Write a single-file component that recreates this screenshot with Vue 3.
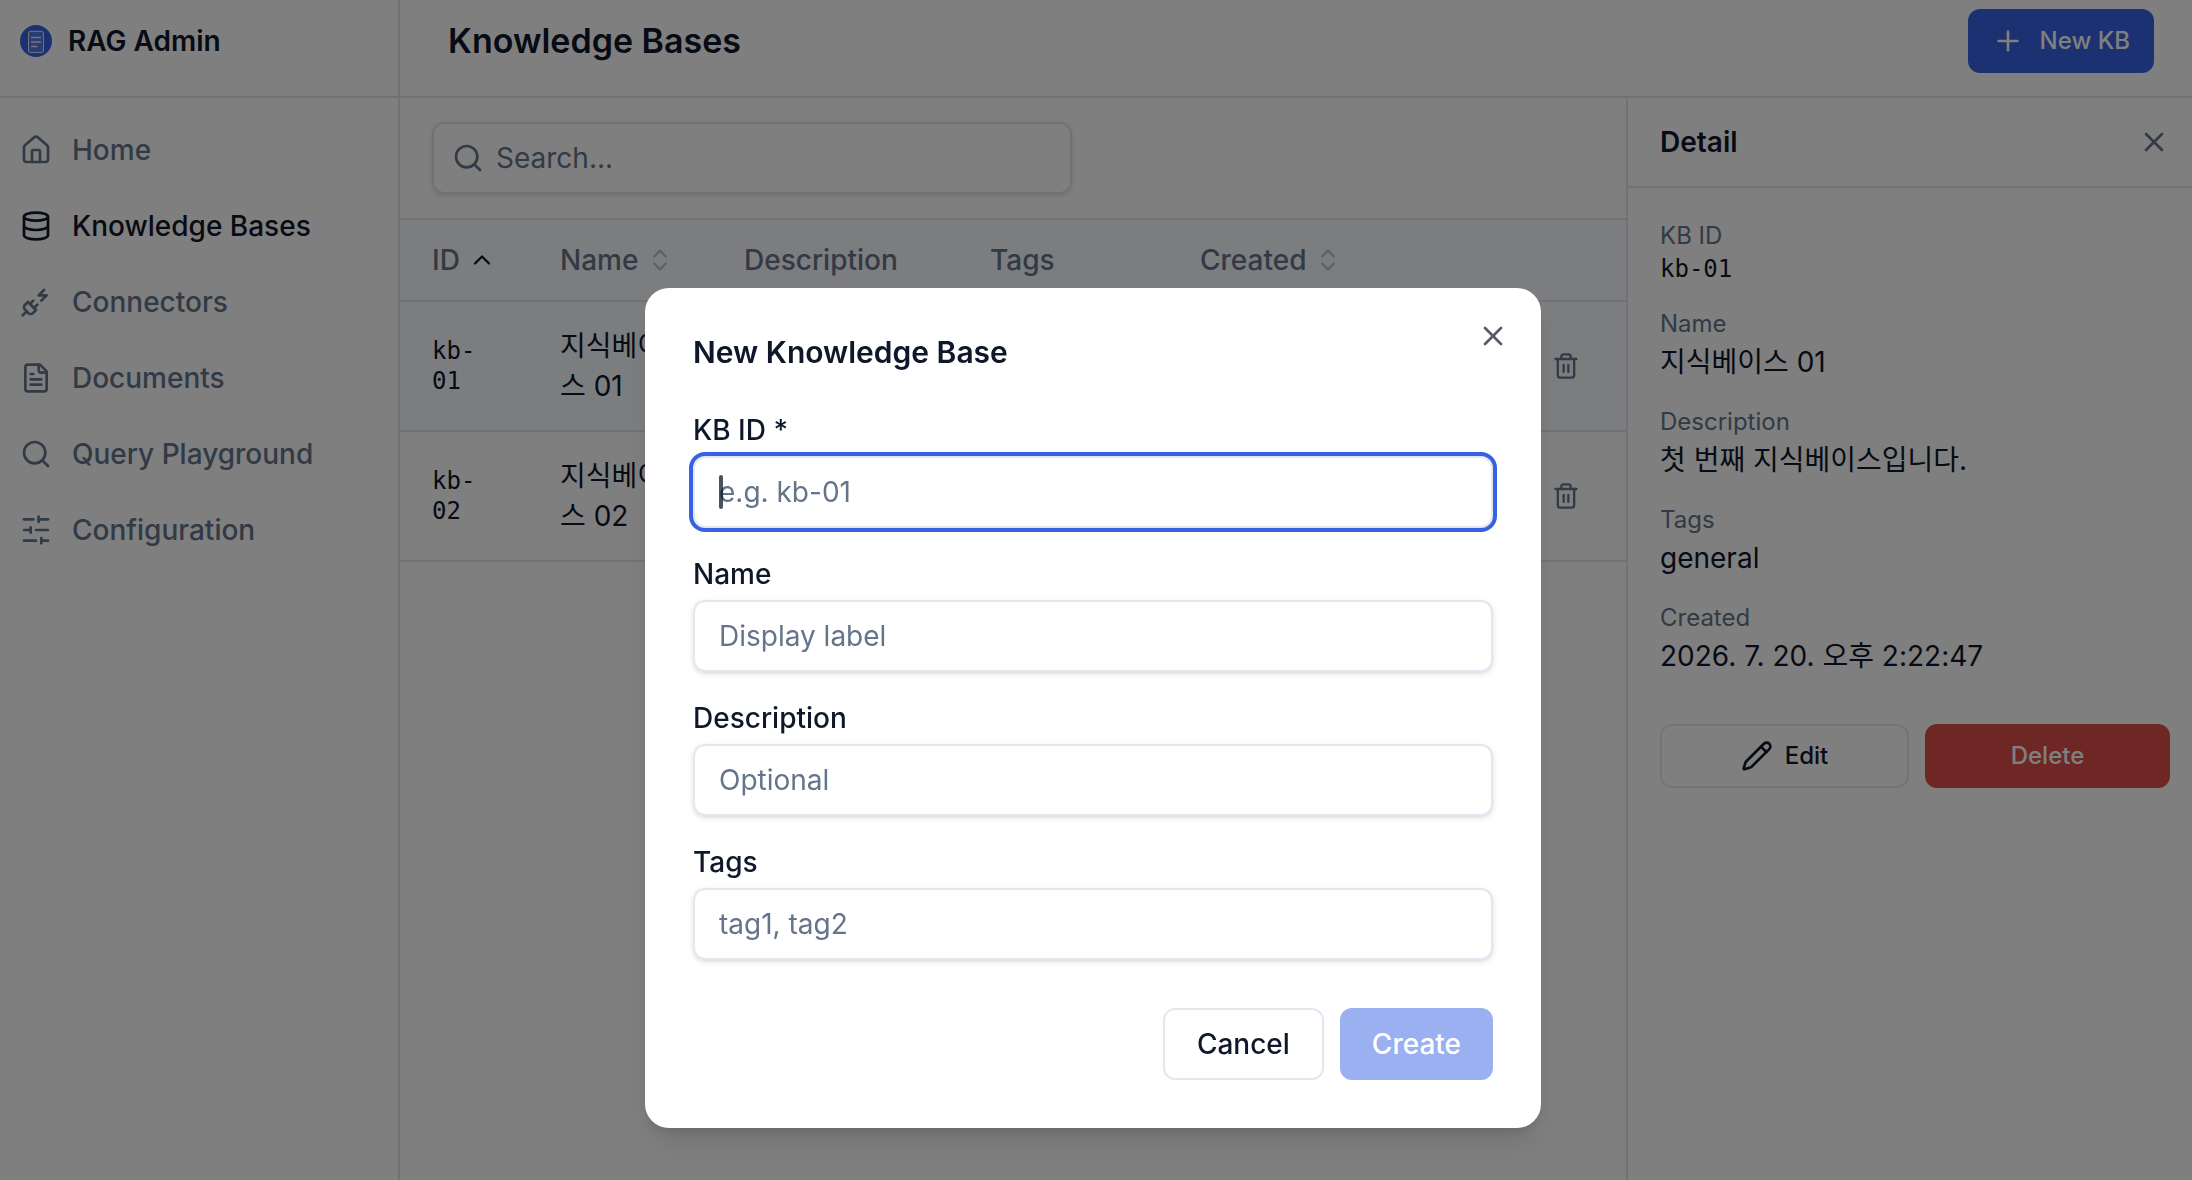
<script setup>
import { ref } from "vue";

// Icon shapes on a 24x24 grid
const icons = {
  house: [
    "M15 21v-8a1 1 0 0 0-1-1h-4a1 1 0 0 0-1 1v8",
    "M3 10a2 2 0 0 1 .709-1.528l7-6a2 2 0 0 1 2.582 0l7 6A2 2 0 0 1 21 10v9a2 2 0 0 1-2 2H5a2 2 0 0 1-2-2z",
  ],
  database: [
    "M3 5a9 3 0 1 0 18 0a9 3 0 1 0-18 0",
    "M3 5v14a9 3 0 0 0 18 0V5",
    "M3 12a9 3 0 0 0 18 0",
  ],
  plug: [
    "M6.3 20.3a2.4 2.4 0 0 0 3.4 0L12 18l-6-6-2.3 2.3a2.4 2.4 0 0 0 0 3.4Z",
    "m2 22 3-3",
    "M7.5 13.5 10 11",
    "M10.5 16.5 13 14",
    "m18 3-4 4h6l-4 4",
  ],
  file: [
    "M15 2H6a2 2 0 0 0-2 2v16a2 2 0 0 0 2 2h12a2 2 0 0 0 2-2V7Z",
    "M14 2v4a2 2 0 0 0 2 2h4",
    "M10 9H8",
    "M16 13H8",
    "M16 17H8",
  ],
  search: ["M3 11a8 8 0 1 0 16 0a8 8 0 1 0-16 0", "m21 21-4.3-4.3"],
  sliders: [
    "M21 4h-7",
    "M10 4H3",
    "M21 12h-9",
    "M8 12H3",
    "M21 20h-5",
    "M12 20H3",
    "M14 2v4",
    "M8 10v4",
    "M16 18v4",
  ],
  plus: ["M5 12h14", "M12 5v14"],
  close: ["M18 6 6 18", "m6 6 12 12"],
  chevronUp: ["m18 15-6-6-6 6"],
  chevrons: ["m7 15 5 5 5-5", "m7 9 5-5 5 5"],
  trash: [
    "M3 6h18",
    "M19 6v14a2 2 0 0 1-2 2H7a2 2 0 0 1-2-2V6",
    "M8 6V4a2 2 0 0 1 2-2h4a2 2 0 0 1 2 2v2",
    "M10 11v6",
    "M14 11v6",
  ],
  pencil: [
    "M21.174 6.812a1 1 0 0 0-3.986-3.987L3.842 16.174a2 2 0 0 0-.5.83l-1.321 4.352a.5.5 0 0 0 .623.622l4.353-1.32a2 2 0 0 0 .83-.497z",
    "m15 5 4 4",
  ],
};

const navItems = [
  { label: "Home", icon: "house" },
  { label: "Knowledge Bases", icon: "database", active: true },
  { label: "Connectors", icon: "plug" },
  { label: "Documents", icon: "file" },
  { label: "Query Playground", icon: "search" },
  { label: "Configuration", icon: "sliders" },
];

const rows = [
  {
    id: "kb-01",
    name: "지식베이스 01",
    description: "첫 번째 지식베이스입니다.",
    tags: "general",
    created: "2026. 7. 20. 오후 2:22:47",
  },
  {
    id: "kb-02",
    name: "지식베이스 02",
    description: "두 번째 지식베이스입니다.",
    tags: "general",
    created: "2026. 7. 20. 오후 2:22:47",
  },
];

const selected = ref(rows[0]);
const search = ref("");
const form = ref({ id: "", name: "", description: "", tags: "" });
</script>

<template>
  <div class="layout">
    <aside class="sidebar">
      <div class="brand">
        <svg class="logo" viewBox="0 0 32 32" aria-hidden="true">
          <circle cx="16" cy="16" r="16" fill="#3662e3" />
          <rect
            x="8.5"
            y="6.3"
            width="15"
            height="21.2"
            rx="1.8"
            fill="#fff"
            fill-opacity="0.15"
            stroke="#fff"
            stroke-opacity="0.85"
            stroke-width="1"
          />
          <path
            d="M11 12.5h10M11 17h10M11 21.5h6.4"
            stroke="#fff"
            stroke-opacity="0.85"
            stroke-width="1.3"
          />
        </svg>
        <span>RAG Admin</span>
      </div>
      <nav class="nav">
        <a
          v-for="item in navItems"
          :key="item.label"
          href="#"
          class="nav-item"
          :class="{ active: item.active }"
        >
          <svg class="icon" viewBox="0 0 24 24" aria-hidden="true">
            <path v-for="d in icons[item.icon]" :key="d" :d="d" />
          </svg>
          {{ item.label }}
        </a>
      </nav>
    </aside>

    <div class="page">
      <header class="page-header">
        <h1>Knowledge Bases</h1>
        <button type="button" class="btn btn-primary">
          <svg class="icon" viewBox="0 0 24 24" aria-hidden="true">
            <path v-for="d in icons.plus" :key="d" :d="d" />
          </svg>
          New KB
        </button>
      </header>

      <div class="page-body">
        <main class="list">
          <div class="toolbar">
            <label class="search">
              <svg class="icon" viewBox="0 0 24 24" aria-hidden="true">
                <path v-for="d in icons.search" :key="d" :d="d" />
              </svg>
              <input
                v-model="search"
                type="text"
                placeholder="Search..."
                aria-label="Search"
              />
            </label>
          </div>
          <table class="kb-table">
            <colgroup>
              <col class="col-id" />
              <col class="col-name" />
              <col class="col-description" />
              <col class="col-tags" />
              <col />
              <col class="col-actions" />
            </colgroup>
            <thead>
              <tr>
                <th>
                  <button type="button" class="sort">
                    ID
                    <svg
                      class="icon icon-sm sorted"
                      viewBox="0 0 24 24"
                      aria-hidden="true"
                    >
                      <path :d="icons.chevronUp[0]" />
                    </svg>
                  </button>
                </th>
                <th>
                  <button type="button" class="sort">
                    Name
                    <svg
                      class="icon icon-sm unsorted"
                      viewBox="0 0 24 24"
                      aria-hidden="true"
                    >
                      <path v-for="d in icons.chevrons" :key="d" :d="d" />
                    </svg>
                  </button>
                </th>
                <th>Description</th>
                <th>Tags</th>
                <th>
                  <button type="button" class="sort">
                    Created
                    <svg
                      class="icon icon-sm unsorted"
                      viewBox="0 0 24 24"
                      aria-hidden="true"
                    >
                      <path v-for="d in icons.chevrons" :key="d" :d="d" />
                    </svg>
                  </button>
                </th>
                <th></th>
              </tr>
            </thead>
            <tbody>
              <tr
                v-for="row in rows"
                :key="row.id"
                :class="{ selected: row.id === selected.id }"
              >
                <td class="mono">{{ row.id }}</td>
                <td>{{ row.name }}</td>
                <td>{{ row.description }}</td>
                <td>{{ row.tags }}</td>
                <td>{{ row.created }}</td>
                <td>
                  <button type="button" class="row-action" aria-label="Delete row">
                    <svg
                      class="icon icon-sm"
                      viewBox="0 0 24 24"
                      aria-hidden="true"
                    >
                      <path v-for="d in icons.trash" :key="d" :d="d" />
                    </svg>
                  </button>
                </td>
              </tr>
            </tbody>
          </table>
        </main>

        <aside class="detail">
          <div class="detail-header">
            <h2>Detail</h2>
            <button type="button" class="icon-btn" aria-label="Close detail">
              <svg class="icon" viewBox="0 0 24 24" aria-hidden="true">
                <path v-for="d in icons.close" :key="d" :d="d" />
              </svg>
            </button>
          </div>
          <div class="detail-body">
            <dl>
              <div>
                <dt>KB ID</dt>
                <dd class="mono">{{ selected.id }}</dd>
              </div>
              <div>
                <dt>Name</dt>
                <dd>{{ selected.name }}</dd>
              </div>
              <div>
                <dt>Description</dt>
                <dd>{{ selected.description }}</dd>
              </div>
              <div>
                <dt>Tags</dt>
                <dd>{{ selected.tags }}</dd>
              </div>
              <div>
                <dt>Created</dt>
                <dd>{{ selected.created }}</dd>
              </div>
            </dl>
            <div class="detail-actions">
              <button type="button" class="btn btn-outline">
                <svg class="icon" viewBox="0 0 24 24" aria-hidden="true">
                  <path v-for="d in icons.pencil" :key="d" :d="d" />
                </svg>
                Edit
              </button>
              <button type="button" class="btn btn-danger">Delete</button>
            </div>
          </div>
        </aside>
      </div>
    </div>

    <div class="overlay">
      <form
        class="dialog"
        role="dialog"
        aria-labelledby="dialog-title"
        @submit.prevent
      >
        <h2 id="dialog-title">New Knowledge Base</h2>
        <button type="button" class="icon-btn dialog-close" aria-label="Close">
          <svg class="icon" viewBox="0 0 24 24" aria-hidden="true">
            <path v-for="d in icons.close" :key="d" :d="d" />
          </svg>
        </button>
        <div class="fields">
          <div class="field">
            <label for="kb-id">KB ID *</label>
            <div class="input-wrap">
              <input
                id="kb-id"
                v-model="form.id"
                class="focused"
                type="text"
                placeholder="e.g. kb-01"
              />
              <span v-if="!form.id" class="caret"></span>
            </div>
          </div>
          <div class="field">
            <label for="kb-name">Name</label>
            <input
              id="kb-name"
              v-model="form.name"
              type="text"
              placeholder="Display label"
            />
          </div>
          <div class="field">
            <label for="kb-description">Description</label>
            <input
              id="kb-description"
              v-model="form.description"
              type="text"
              placeholder="Optional"
            />
          </div>
          <div class="field">
            <label for="kb-tags">Tags</label>
            <input
              id="kb-tags"
              v-model="form.tags"
              type="text"
              placeholder="tag1, tag2"
            />
          </div>
        </div>
        <div class="dialog-actions">
          <button type="button" class="btn btn-lg btn-outline">Cancel</button>
          <button type="submit" class="btn btn-lg btn-primary" :disabled="!form.id">
            Create
          </button>
        </div>
      </form>
    </div>
  </div>
</template>

<style>
body {
  margin: 0;
  background: #ffffff;
}
</style>

<style scoped>
* {
  box-sizing: border-box;
}
.layout {
  display: flex;
  min-height: 100vh;
  font-family: Inter, "Noto Sans CJK KR", sans-serif;
  font-size: 28px;
  line-height: 40px;
  color: #0f172a;
  background: #ffffff;
}
h1,
h2,
dl,
dd {
  margin: 0;
}
button,
input {
  font: inherit;
  color: inherit;
}
button {
  border: none;
  background: none;
  padding: 0;
  cursor: pointer;
}
.icon {
  width: 32px;
  height: 32px;
  flex-shrink: 0;
  fill: none;
  stroke: currentColor;
  stroke-width: 2;
  stroke-linecap: round;
  stroke-linejoin: round;
}
.icon-sm {
  width: 28px;
  height: 28px;
}

/* Sidebar */
.sidebar {
  width: 400px;
  flex-shrink: 0;
  border-right: 2px solid #e4e4ec;
}
.brand {
  display: flex;
  align-items: center;
  gap: 16px;
  height: 98px;
  padding: 8px 20px 22px;
  border-bottom: 2px solid #e4e4ec;
  font-weight: 600;
}
.logo {
  width: 32px;
  height: 32px;
}
.nav {
  display: flex;
  flex-direction: column;
  gap: 4px;
  padding: 16px 0;
}
.nav-item {
  display: flex;
  align-items: center;
  gap: 20px;
  padding: 16px 20px;
  font-weight: 500;
  color: #64748b;
  text-decoration: none;
}
.nav-item.active {
  color: #0f172a;
}

/* Page */
.page {
  display: flex;
  flex-direction: column;
  flex: 1;
  min-width: 0;
}
.page-header {
  display: flex;
  align-items: center;
  justify-content: space-between;
  height: 98px;
  padding: 8px 38px 22px 48px;
  border-bottom: 2px solid #e4e4ec;
}
.page-header h1 {
  font-size: 34px;
  font-weight: 600;
}
.page-body {
  display: flex;
  flex: 1;
}
.list {
  flex: 1;
  min-width: 0;
}
.toolbar {
  padding: 24px 32px;
  border-bottom: 2px solid #e4e4ec;
}
.search {
  display: flex;
  align-items: center;
  gap: 12px;
  width: 640px;
  height: 72px;
  padding: 0 18px;
  border: 2px solid #e4e4ec;
  border-radius: 12px;
  color: #64748b;
  box-shadow: 0 2px 6px rgba(0, 0, 0, 0.1), 0 2px 4px -2px rgba(0, 0, 0, 0.1);
}
.search input {
  flex: 1;
  min-width: 0;
  padding: 0;
  border: none;
  outline: none;
  background: none;
}
input::placeholder {
  color: #64748b;
  opacity: 1;
}

/* Table */
.kb-table {
  width: 100%;
  table-layout: fixed;
  border-collapse: separate;
  border-spacing: 0;
}
.col-id {
  width: 128px;
}
.col-name {
  width: 184px;
}
.col-description {
  width: 246px;
}
.col-tags {
  width: 210px;
}
.col-actions {
  width: 120px;
}
th,
td {
  border-bottom: 2px solid #e4e4ec;
  text-align: left;
}
th {
  padding: 20px 32px;
  font-weight: 500;
  color: #64748b;
  background: #f8fafc;
}
td {
  padding: 24px 32px;
}
.selected td {
  background: #f8fafc;
}
.sort {
  display: flex;
  align-items: center;
  gap: 8px;
}
.sorted {
  color: #0f172a;
}
.unsorted {
  opacity: 0.4;
}
.mono {
  font-family: "DejaVu Sans Mono", monospace;
  font-size: 24px;
  line-height: 30px;
}
.row-action {
  display: flex;
  align-items: center;
  justify-content: center;
  width: 56px;
  height: 56px;
  color: #64748b;
}

/* Detail panel */
.detail {
  width: 566px;
  flex-shrink: 0;
  border-left: 2px solid #e4e4ec;
}
.detail-header {
  display: flex;
  align-items: center;
  justify-content: space-between;
  padding: 24px 22px 24px 32px;
  border-bottom: 2px solid #e4e4ec;
}
.detail-header h2 {
  font-size: 28px;
  font-weight: 600;
}
.icon-btn {
  display: flex;
  color: #64748b;
}
.detail-body {
  display: flex;
  flex-direction: column;
  gap: 48px;
  padding: 32px 22px 32px 32px;
}
dl {
  display: flex;
  flex-direction: column;
  gap: 24px;
}
dt {
  margin-bottom: 2px;
  font-size: 24px;
  line-height: 32px;
  color: #64748b;
}
.detail-actions {
  display: flex;
  gap: 16px;
}
.detail-actions .btn {
  flex: 1;
  gap: 12px;
}

/* Buttons */
.btn {
  display: inline-flex;
  align-items: center;
  justify-content: center;
  gap: 16px;
  height: 64px;
  padding: 0 24px;
  border-radius: 12px;
  font-size: 24px;
  font-weight: 500;
}
.btn-lg {
  height: 72px;
  padding: 0 32px;
  font-size: 28px;
}
.btn-primary {
  background: #3662e3;
  color: #ffffff;
}
.btn-outline {
  border: 2px solid #e2e8f0;
}
.btn-danger {
  background: #dc4f4a;
  color: #ffffff;
}
.btn:disabled {
  opacity: 0.5;
  cursor: default;
}

/* Dialog */
.overlay {
  position: fixed;
  inset: 0;
  display: flex;
  align-items: flex-start;
  justify-content: center;
  padding: 288px 6px 0 0;
  overflow: auto;
  background: rgba(0, 0, 0, 0.5);
}
.dialog {
  position: relative;
  width: 896px;
  padding: 48px;
  border-radius: 24px;
  background: #ffffff;
  box-shadow: 0 20px 30px -6px rgba(0, 0, 0, 0.1),
    0 8px 12px -4px rgba(0, 0, 0, 0.1);
}
.dialog h2 {
  font-size: 30px;
  line-height: 32px;
  font-weight: 600;
}
.dialog-close {
  position: absolute;
  top: 32px;
  right: 32px;
  color: #0f172a;
  opacity: 0.7;
}
.fields {
  display: flex;
  flex-direction: column;
  gap: 32px;
  margin: 48px 0;
}
.field {
  display: flex;
  flex-direction: column;
  gap: 12px;
}
.field label {
  line-height: 28px;
  font-weight: 500;
}
.field input {
  width: 100%;
  height: 72px;
  padding: 0 24px;
  border: 2px solid #e2e8f0;
  border-radius: 12px;
  outline: none;
  background: #ffffff;
  box-shadow: 0 2px 6px rgba(0, 0, 0, 0.1), 0 2px 4px -2px rgba(0, 0, 0, 0.1);
}
.field input.focused {
  box-shadow: 0 0 0 4px #3662e3;
}
.input-wrap {
  position: relative;
}
.caret {
  position: absolute;
  top: 19px;
  left: 26px;
  width: 4px;
  height: 34px;
  border-radius: 2px;
  background: #0f172a;
  opacity: 0.75;
}
.dialog-actions {
  display: flex;
  justify-content: flex-end;
  gap: 16px;
}
</style>
